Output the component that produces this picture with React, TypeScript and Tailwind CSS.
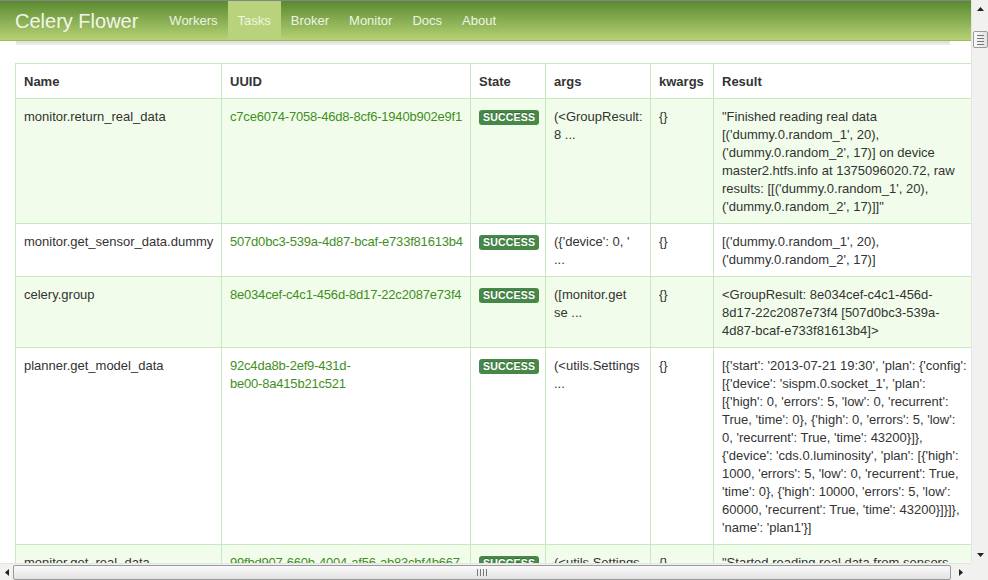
type Task = {
  name: string;
  uuid: string[];
  args: string[];
  result: string[];
};

const tasks: Task[] = [
  {
    name: "monitor.return_real_data",
    uuid: ["c7ce6074-7058-46d8-8cf6-1940b902e9f1"],
    args: ["(<GroupResult:", "8 ..."],
    result: [
      '"Finished reading real data',
      "[('dummy.0.random_1', 20),",
      "('dummy.0.random_2', 17)] on device",
      "master2.htfs.info at 1375096020.72, raw",
      "results: [[('dummy.0.random_1', 20),",
      "('dummy.0.random_2', 17)]]\"",
    ],
  },
  {
    name: "monitor.get_sensor_data.dummy",
    uuid: ["507d0bc3-539a-4d87-bcaf-e733f81613b4"],
    args: ["({'device': 0, '", "..."],
    result: ["[('dummy.0.random_1', 20),", "('dummy.0.random_2', 17)]"],
  },
  {
    name: "celery.group",
    uuid: ["8e034cef-c4c1-456d-8d17-22c2087e73f4"],
    args: ["([monitor.get", "se ..."],
    result: [
      "<GroupResult: 8e034cef-c4c1-456d-",
      "8d17-22c2087e73f4 [507d0bc3-539a-",
      "4d87-bcaf-e733f81613b4]>",
    ],
  },
  {
    name: "planner.get_model_data",
    uuid: ["92c4da8b-2ef9-431d-", "be00-8a415b21c521"],
    args: ["(<utils.Settings", "..."],
    result: [
      "[{'start': '2013-07-21 19:30', 'plan': {'config':",
      "[{'device': 'sispm.0.socket_1', 'plan':",
      "[{'high': 0, 'errors': 5, 'low': 0, 'recurrent':",
      "True, 'time': 0}, {'high': 0, 'errors': 5, 'low':",
      "0, 'recurrent': True, 'time': 43200}]},",
      "{'device': 'cds.0.luminosity', 'plan': [{'high':",
      "1000, 'errors': 5, 'low': 0, 'recurrent': True,",
      "'time': 0}, {'high': 10000, 'errors': 5, 'low':",
      "60000, 'recurrent': True, 'time': 43200}]}]},",
      "'name': 'plan1'}]",
    ],
  },
  {
    name: "monitor.get_real_data",
    uuid: ["99fbd907-660b-4004-af56-ab83cbf4b667"],
    args: ["(<utils.Settings", "..."],
    result: ['"Started reading real data from sensors'],
  },
];

const navItems = ["Workers", "Tasks", "Broker", "Monitor", "Docs", "About"];

function Lines({ lines }: { lines: string[] }) {
  return (
    <>
      {lines.map((l, i) => (
        <div key={i} className="whitespace-nowrap">
          {l}
        </div>
      ))}
    </>
  );
}

function Grip({ vertical }: { vertical: boolean }) {
  return (
    <div className={vertical ? "flex flex-col gap-[2px]" : "flex gap-[2px]"}>
      {[0, 1, 2, 3].map((i) => (
        <div
          key={i}
          className={vertical ? "w-[7px] h-px bg-[#777]" : "h-[7px] w-px bg-[#777]"}
        />
      ))}
    </div>
  );
}

export default function App() {
  const cell = "border border-[#c8e9bf] px-[8px] pt-[9px] pb-[7px] align-top";
  return (
    <div className="w-[988px] h-[580px] flex flex-col overflow-hidden bg-white font-['Liberation_Sans',Arial,sans-serif] text-[13px] leading-[18px] text-[#333]">
      <div className="flex h-[563px]">
        {/* page */}
        <div className="w-[971px] overflow-hidden">
          <div className="h-[41px] border-t border-[#858585] bg-gradient-to-b from-[#5a8a30] to-[#b7d275] flex items-stretch border-b border-b-[#9cbc5c]">
            <div className="pl-[15px] pr-[21px] flex items-center text-[20px] text-[#f2f6ea]">
              Celery Flower
            </div>
            {navItems.map((n) => (
              <div
                key={n}
                className={
                  "px-[10px] flex items-center text-[13px] text-[#eef4e2] " +
                  (n === "Tasks" ? "bg-[#b9d27c]" : "")
                }
              >
                {n}
              </div>
            ))}
          </div>
          <div className="ml-[16px] w-[934px] h-[4px] bg-gradient-to-b from-[#dcdcdc] to-[#f0f0f0]" />

          <table className="mt-[18px] ml-[15px] border-collapse table-fixed w-[962px]">
            <colgroup>
              <col className="w-[206px]" />
              <col className="w-[249px]" />
              <col className="w-[75px]" />
              <col className="w-[105px]" />
              <col className="w-[63px]" />
              <col className="w-[264px]" />
            </colgroup>
            <thead>
              <tr className="text-left font-bold">
                {["Name", "UUID", "State", "args", "kwargs", "Result"].map((h) => (
                  <th key={h} className="border border-[#c8e9bf] px-[8px] pt-[9px] pb-[7px] align-top whitespace-nowrap">
                    {h}
                  </th>
                ))}
              </tr>
            </thead>
            <tbody>
              {tasks.map((t, i) => (
                <tr key={t.name} className={i % 2 === 0 ? "bg-[#f1fdea]" : "bg-white"}>
                  <td className={cell}>{t.name}</td>
                  <td className={cell + " text-[#3f8f1e] tracking-[-0.2px]"}>
                    <Lines lines={t.uuid} />
                  </td>
                  <td className={cell}>
                    <span className="inline-block align-top mt-[2px] rounded-[3px] bg-[#468847] px-[4px] text-[10.5px] leading-[15px] font-bold text-white tracking-[0.2px] [text-shadow:0_-1px_0_rgba(0,0,0,0.25)]">
                      SUCCESS
                    </span>
                  </td>
                  <td className={cell}>
                    <Lines lines={t.args} />
                  </td>
                  <td className={cell}>{"{}"}</td>
                  <td className={cell}>
                    <Lines lines={t.result} />
                  </td>
                </tr>
              ))}
            </tbody>
          </table>
        </div>

        {/* vertical scrollbar */}
        <div className="w-[17px] flex flex-col bg-[#f1f1ef] border-l border-[#e4e4e2]">
          <div className="h-[17px] flex items-center justify-center">
            <svg width="7" height="4" viewBox="0 0 7 4">
              <polygon points="3.5,0 7,4 0,4" fill="#222" />
            </svg>
          </div>
          <div className="flex-1 flex flex-col items-center">
            <div className="mt-[14px] w-[15px] h-[17px] rounded-[2px] border border-[#9a9a9a] bg-gradient-to-r from-[#fafafa] to-[#e2e2e2] flex items-center justify-center">
              <Grip vertical />
            </div>
          </div>
          <div className="h-[17px] flex items-center justify-center">
            <svg width="7" height="4" viewBox="0 0 7 4">
              <polygon points="0,0 7,0 3.5,4" fill="#222" />
            </svg>
          </div>
        </div>
      </div>

      {/* horizontal scrollbar */}
      <div className="flex h-[17px]">
        <div className="w-[971px] flex items-center bg-[#f1f1ef] border-t border-[#e4e4e2]">
          <div className="w-[13px] flex items-center justify-center">
            <svg width="4" height="7" viewBox="0 0 4 7">
              <polygon points="4,0 4,7 0,3.5" fill="#222" />
            </svg>
          </div>
          <div className="flex-1 h-[15px] rounded-[2px] border border-[#9a9a9a] bg-gradient-to-b from-[#fafafa] to-[#e2e2e2] flex items-center justify-center">
            <Grip vertical={false} />
          </div>
          <div className="w-[20px] flex items-center justify-center">
            <svg width="4" height="7" viewBox="0 0 4 7">
              <polygon points="0,0 4,3.5 0,7" fill="#222" />
            </svg>
          </div>
        </div>
        <div className="w-[17px] bg-[#f1f1ef]" />
      </div>
    </div>
  );
}
